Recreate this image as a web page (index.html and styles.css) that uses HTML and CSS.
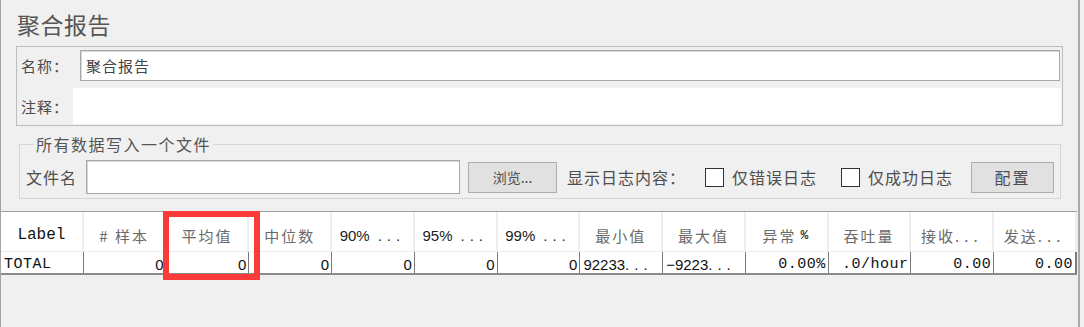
FILE: index.html
```html
<!DOCTYPE html>
<html lang="zh-CN">
<head>
    <meta charset="UTF-8">
    <title>聚合报告</title>
    <link rel="stylesheet" href="styles.css">
</head>
<body>
<div class="frame">
    <h1 class="title">聚合报告</h1>

    <!-- Имя и комментарий -->
    <div class="name-panel">
        <div class="row row-name">
            <span class="lbl lbl-name">名称：</span>
            <div class="field field-name">聚合报告</div>
        </div>
        <div class="row row-comment">
            <span class="lbl lbl-comment">注释：</span>
            <div class="field-comment"></div>
        </div>
    </div>

    <!-- Запись в файл -->
    <fieldset class="file-box">
        <legend>所有数据写入一个文件</legend>
        <div class="file-row">
            <span class="lbl lbl-file">文件名</span>
            <div class="field field-file"></div>
            <button class="btn btn-browse">浏览...</button>
            <span class="lbl lbl-log">显示日志内容：</span>
            <label class="check check-err"><span class="box"></span><span class="lbl">仅错误日志</span></label>
            <label class="check check-ok"><span class="box"></span><span class="lbl">仅成功日志</span></label>
            <button class="btn btn-config">配置</button>
        </div>
    </fieldset>

    <!-- Таблица отчёта -->
    <div class="report">
        <div class="grid head">
            <div class="cell mono dark">Label</div>
            <div class="cell"># 样本</div>
            <div class="cell">平均值</div>
            <div class="cell">中位数</div>
            <div class="cell latin">90%<span class="dots gap">...</span></div>
            <div class="cell latin">95%<span class="dots gap">...</span></div>
            <div class="cell latin">99%<span class="dots gap">...</span></div>
            <div class="cell">最小值</div>
            <div class="cell">最大值</div>
            <div class="cell">异常 <b class="pct">%</b></div>
            <div class="cell">吞吐量</div>
            <div class="cell">接收<span class="dots">...</span></div>
            <div class="cell">发送<span class="dots">...</span></div>
        </div>
        <div class="grid data">
            <div class="cell left mono">TOTAL</div>
            <div class="cell">0</div>
            <div class="cell">0</div>
            <div class="cell">0</div>
            <div class="cell">0</div>
            <div class="cell">0</div>
            <div class="cell">0</div>
            <div class="cell left">92233<span class="dots">...</span></div>
            <div class="cell left">−9223<span class="dots">...</span></div>
            <div class="cell mono">0.00%</div>
            <div class="cell mono">.0/hour</div>
            <div class="cell mono">0.00</div>
            <div class="cell mono">0.00</div>
        </div>
        <div class="highlight"></div>
    </div>
</div>
</body>
</html>
```

FILE: styles.css
```css
/* Базовые стили */
*, *::before, *::after {
    box-sizing: border-box;
}
body {
    margin: 0;
    height: 327px;
    overflow: hidden;
    background: #f0f0f0;
    font-family: "Noto Sans CJK SC", "Liberation Sans", sans-serif;
    color: #505050;
}
.frame {
    position: relative;
    width: 1080px;
    height: 327px;
    border-left: 1px solid #a3a3a3;
    border-right: 2px solid #aaaaaa;
}
.title {
    margin: 0;
    height: 46px;
    padding-left: 16px;
    font-size: 23px;
    font-weight: 400;
    line-height: 48px;
    letter-spacing: 0.5px;
    color: #555;
}
.lbl {
    font-size: 15px;
    letter-spacing: 1px;
    color: #4d4d4d;
    white-space: nowrap;
}

/* Панель имени */
.name-panel {
    margin-left: 15px;
    width: 1047px;
    height: 80px;
    border: 1px solid #bdbdbd;
    padding: 3px 1px 0 3px;
}
.row {
    display: flex;
    align-items: center;
}
.row-name {
    height: 31px;
}
.row-comment {
    margin-top: 7px;
    height: 36px;
}
.lbl-name {
    width: 60px;
    padding-left: 1px;
}
.lbl-comment {
    width: 53px;
    padding-left: 1px;
}
.field {
    background: #fff;
    border: 1px solid #a8a8a8;
    box-shadow: inset 1px 1px 0 #d8d8d8;
}
.field-name {
    flex: 1;
    height: 31px;
    margin-right: 1px;
    padding-left: 5px;
    font-size: 15px;
    line-height: 29px;
    letter-spacing: 1px;
    color: #444;
}
.field-comment {
    flex: 1;
    height: 36px;
    background: #fff;
}

/* Блок записи в файл */
.file-box {
    margin: 9px 0 0 18px;
    width: 1042px;
    padding: 7px 6px 4px 6px;
    border: 1px solid #d6d6d6;
}
.file-box legend {
    margin-left: 8px;
    padding: 0 2px;
    font-size: 16px;
    line-height: 18px;
    letter-spacing: 1.5px;
    color: #555;
}
.file-row {
    display: flex;
    align-items: center;
    height: 34px;
}
.file-row .lbl {
    font-size: 16px;
}
.lbl-file {
    width: 60px;
}
.field-file {
    width: 374px;
    height: 34px;
}
.btn {
    height: 31px;
    border: 1px solid #adadad;
    background: #e1e1e1;
    font-family: "Noto Sans CJK SC", sans-serif;
    color: #4d4d4d;
    padding: 0;
}
.btn-browse {
    margin-left: 8px;
    width: 89px;
    font-size: 14px;
}
.btn-config {
    margin-left: 16px;
    width: 83px;
    font-size: 16px;
    letter-spacing: 2px;
}
.lbl-log {
    margin-left: 10px;
    width: 138px;
}
.check {
    display: flex;
    align-items: center;
}
.check .box {
    width: 19px;
    height: 19px;
    background: #fff;
    border: 1.5px solid #333;
    margin-right: 8px;
}
.check-err {
    width: 136px;
}
.check-ok {
    width: 114px;
}

/* Таблица */
.report {
    position: relative;
    margin-top: 12px;
    width: 1076px;
    border-top: 1px solid #a0a0a0;
}
.grid {
    display: grid;
    grid-template-columns: repeat(13, 1fr);
}
.head {
    height: 40px;
    background: #fff;
    border-bottom: 1px solid #ececec;
}
.head .cell {
    display: flex;
    align-items: center;
    justify-content: center;
    padding-top: 7px;
    border-right: 2px solid #eeeeee;
    font-size: 15px;
    letter-spacing: 2px;
    color: #6a6a6a;
}
.head .latin {
    font-family: "Liberation Sans", sans-serif;
    font-size: 15px;
    letter-spacing: 0;
    color: #222;
}
.head .dark {
    color: #111;
    font-size: 16px;
    letter-spacing: 0;
}
.dots {
    letter-spacing: 5px;
}
.gap {
    margin-left: 8px;
}
.pct {
    margin-left: 4px;
    font-family: "Liberation Mono", monospace;
    font-size: 13px;
    color: #333;
}
.mono {
    font-family: "Liberation Mono", monospace;
}
.data {
    height: 23px;
    background: #fff;
    border-bottom: 2px solid #8a8a8a;
}
.data .cell {
    padding: 2px 2px 0 0;
    border-right: 1px solid #7a7a7a;
    font-family: "Liberation Sans", sans-serif;
    font-size: 15px;
    line-height: 21px;
    text-align: right;
    color: #111;
    white-space: nowrap;
    overflow: hidden;
}
.data .cell.mono {
    font-family: "Liberation Mono", monospace;
    letter-spacing: 0.5px;
}
.data .left {
    text-align: left;
    padding-left: 3px;
}
.data .cell:last-child {
    border-right: 2px solid #7a7a7a;
}
.highlight {
    position: absolute;
    left: 162px;
    top: -1px;
    width: 97px;
    height: 69px;
    border: 6px solid #fb3a3a;
}
```
